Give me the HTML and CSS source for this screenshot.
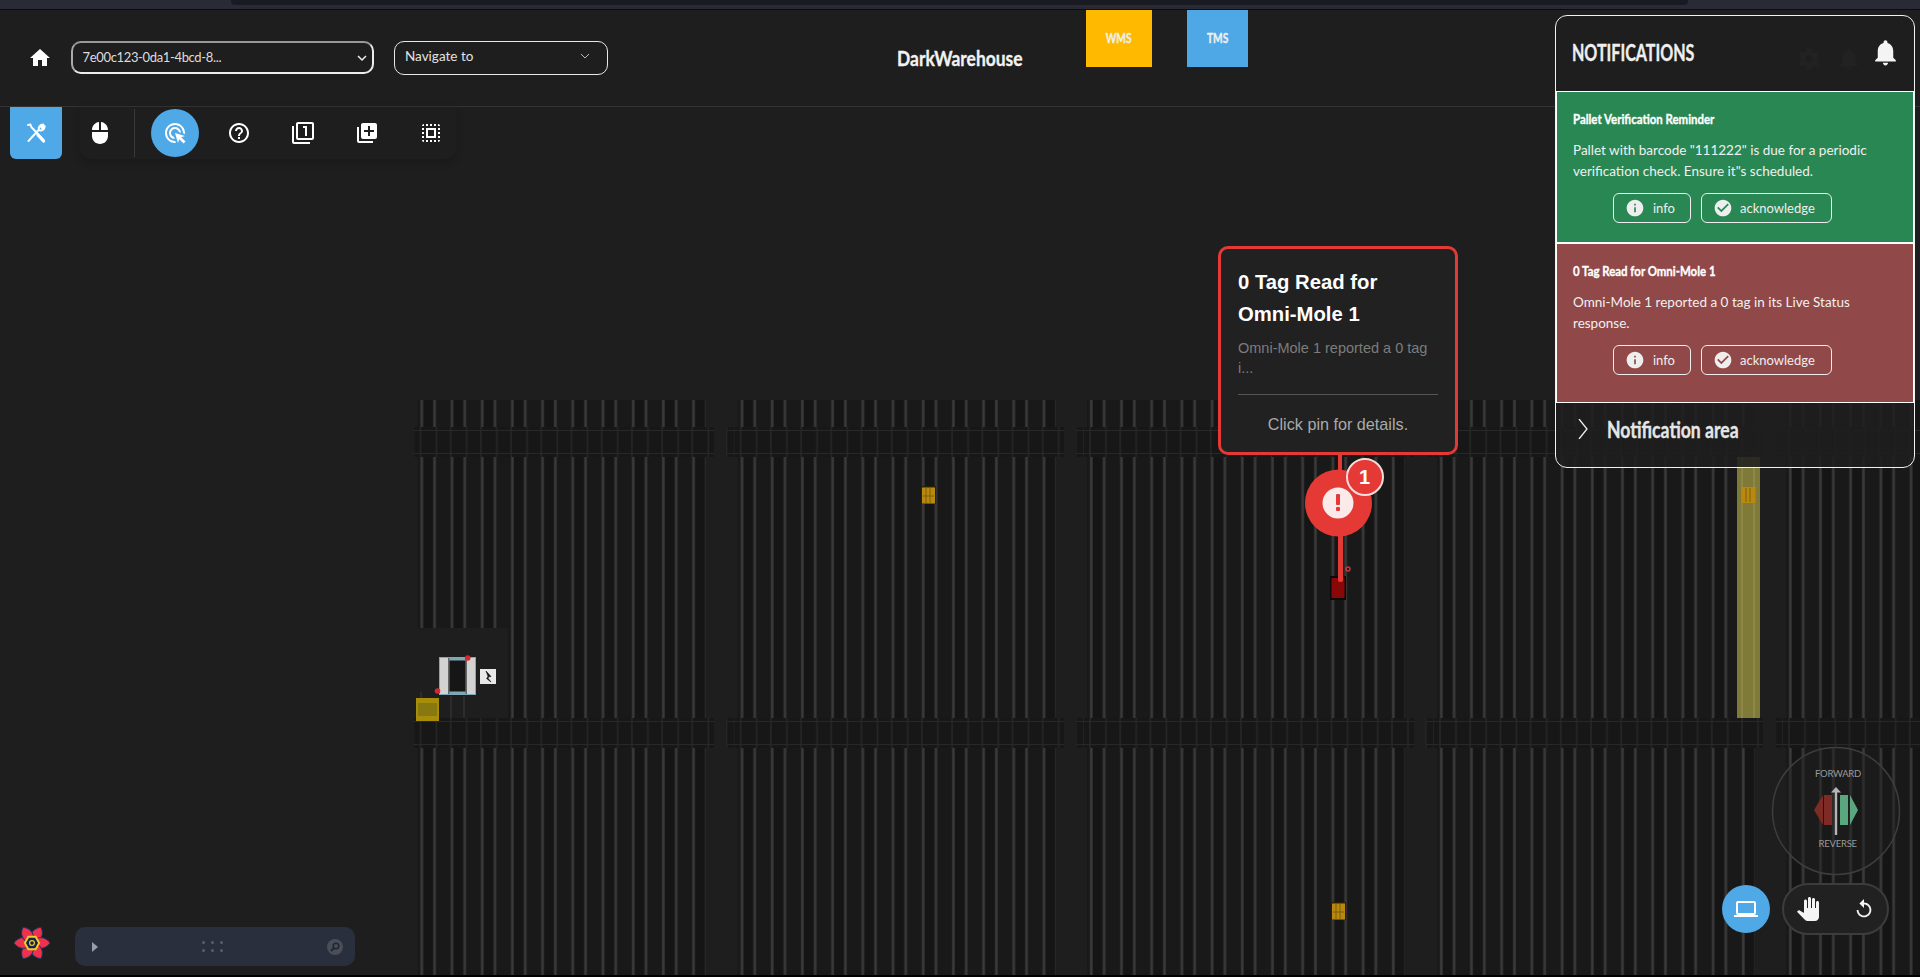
FILE: index.html
```html
<!DOCTYPE html>
<html lang="en">
<head>
<meta charset="utf-8">
<title>DarkWarehouse</title>
<link rel="stylesheet" href="styles.css">
</head>
<body>
<svg class="map" width="1920" height="977" viewBox="0 0 1920 977">
  <defs>
    <pattern id="lanes" patternUnits="userSpaceOnUse" width="30.2" height="8">
      <rect width="30.2" height="8" fill="#191919"/>
      <rect x="0" width="15" height="8" fill="#151515"/>
      <rect x="-.5" width="3.400" height="8" fill="#222"/>
      <rect x="29.700" width=".5" height="8" fill="#222"/>
      <rect x="12.300" width="3.400" height="8" fill="#222"/>
      <rect x=".2" width="2.200" height="8" fill="#3a3a3a"/>
      <rect x="13" width="2.200" height="8" fill="#3a3a3a"/>
    </pattern>
    <pattern id="bandlanes" patternUnits="userSpaceOnUse" width="30.2" height="30">
      <rect width="30.2" height="30" fill="#171717"/>
      <rect x="-.8" width="1.600" height="30" fill="#262626"/>
      <rect x="15.200" width="1.600" height="30" fill="#262626"/>
      <rect x="29.400" width=".8" height="30" fill="#262626"/>
    </pattern>
    <g id="hband">
      <rect x="-7" y="0" width="1" height="30" fill="#222"/>
      <rect x="-14" y="3" width="400" height="1" fill="#282828"/>
      <rect x="-14" y="26" width="400" height="1" fill="#282828"/>
    </g>
    <clipPath id="c1"><rect x="413" y="400" width="301" height="575"/></clipPath>
    <clipPath id="c2"><rect x="726" y="400" width="338" height="575"/></clipPath>
    <clipPath id="c3"><rect x="1076" y="400" width="338" height="575"/></clipPath>
    <clipPath id="c4"><rect x="1425" y="400" width="338" height="575"/></clipPath>
    <clipPath id="c5"><rect x="1776" y="400" width="144" height="575"/></clipPath>
    <path id="petal" d="M0 0C-8-5-7-14 0-19C7-14 8-5 0 0Z"/>
  </defs>

  <g clip-path="url(#c1)"><g transform="translate(420.5 0)">
    <rect x="-3" y="400" width="288" height="27" fill="url(#lanes)"/>
    <rect x="-3" y="457" width="288" height="261" fill="url(#lanes)"/>
    <rect x="-3" y="748" width="288" height="227" fill="url(#lanes)"/>
    <rect x="-8" y="427" width="302" height="30" fill="url(#bandlanes)"/>
    <rect x="-8" y="718" width="302" height="30" fill="url(#bandlanes)"/>
    <use href="#hband" y="427"/><use href="#hband" y="718"/>
  </g></g>
  <g clip-path="url(#c2)"><g transform="translate(740.7 0)">
    <rect x="-3" y="400" width="318" height="27" fill="url(#lanes)"/>
    <rect x="-3" y="457" width="318" height="261" fill="url(#lanes)"/>
    <rect x="-3" y="748" width="318" height="227" fill="url(#lanes)"/>
    <rect x="-15" y="427" width="340" height="30" fill="url(#bandlanes)"/>
    <rect x="-15" y="718" width="340" height="30" fill="url(#bandlanes)"/>
    <use href="#hband" y="427"/><use href="#hband" y="718"/>
  </g></g>
  <g clip-path="url(#c3)"><g transform="translate(1090 0)">
    <rect x="-3" y="400" width="318" height="27" fill="url(#lanes)"/>
    <rect x="-3" y="457" width="318" height="261" fill="url(#lanes)"/>
    <rect x="-3" y="748" width="318" height="227" fill="url(#lanes)"/>
    <rect x="-15" y="427" width="340" height="30" fill="url(#bandlanes)"/>
    <rect x="-15" y="718" width="340" height="30" fill="url(#bandlanes)"/>
    <use href="#hband" y="427"/><use href="#hband" y="718"/>
  </g></g>
  <g clip-path="url(#c4)"><g transform="translate(1440 0)">
    <rect x="-3" y="400" width="318" height="27" fill="url(#lanes)"/>
    <rect x="-3" y="457" width="318" height="261" fill="url(#lanes)"/>
    <rect x="-3" y="748" width="318" height="227" fill="url(#lanes)"/>
    <rect x="-15" y="427" width="340" height="30" fill="url(#bandlanes)"/>
    <rect x="-15" y="718" width="340" height="30" fill="url(#bandlanes)"/>
    <use href="#hband" y="427"/><use href="#hband" y="718"/>
  </g></g>
  <g clip-path="url(#c5)"><g transform="translate(1789 0)">
    <rect x="-3" y="400" width="140" height="27" fill="url(#lanes)"/>
    <rect x="-3" y="457" width="140" height="261" fill="url(#lanes)"/>
    <rect x="-3" y="748" width="140" height="227" fill="url(#lanes)"/>
    <rect x="-13" y="427" width="150" height="30" fill="url(#bandlanes)"/>
    <rect x="-13" y="718" width="150" height="30" fill="url(#bandlanes)"/>
    <use href="#hband" y="427"/><use href="#hband" y="718"/>
  </g></g>

  <rect x="414" y="628" width="94" height="90" fill="#1e1e1e"/>
  <rect x="420" y="692" width="2" height="6" fill="#2c2c2c"/>
  <rect x="450" y="696" width="2" height="22" fill="#2c2c2c"/>
  <rect x="463" y="696" width="2" height="22" fill="#2c2c2c"/>

  <rect x="439" y="657" width="37" height="38" fill="#7ea9b5"/>
  <rect x="440" y="658" width="8" height="36" fill="#d2d2d2"/>
  <rect x="467" y="658" width="8" height="36" fill="#d2d2d2"/>
  <rect x="448" y="658" width="1.500" height="36" fill="#666"/>
  <rect x="465.500" y="658" width="1.500" height="36" fill="#666"/>
  <rect x="449.500" y="660.500" width="16" height="31" fill="#161616"/>
  <circle cx="467.7" cy="658" r="2.800" fill="#d8262c"/>
  <circle cx="437.500" cy="691" r="2.800" fill="#d8262c"/>
  <rect x="480" y="669" width="16" height="15" fill="#e8e8e8"/>
  <path d="M486 671L491 676.500L487 677L491 682L486.500 678.500L488.500 677.500Z" fill="#111" stroke="#111" stroke-width=".6"/>
  <rect x="416" y="698" width="23" height="23" fill="#a68e0c"/>
  <rect x="418" y="703" width="19" height="13" fill="#87790f"/>

  <rect x="921" y="486" width="15" height="18" fill="#2a2108"/>
  <rect x="922" y="487.500" width="13" height="16" fill="#b8890e"/>
  <path d="M926 488V503M930 488V503M923 496H934" stroke="#7e5f0a" stroke-width="1"/>
  <rect x="1331" y="902" width="15" height="18" fill="#2a2108"/>
  <rect x="1332" y="903.500" width="13" height="16" fill="#b8890e"/>
  <path d="M1336 904V919M1340 904V919M1333 912H1344" stroke="#7e5f0a" stroke-width="1"/>

  <rect x="1737" y="457" width="23" height="261" fill="#7f7a38"/>
  <rect x="1741" y="457" width="2" height="261" fill="#8d8849"/>
  <rect x="1753" y="457" width="2" height="261" fill="#8d8849"/>
  <rect x="1741.500" y="487" width="14" height="16" fill="#b8890e"/>
  <path d="M1746 488V502M1750 488V502" stroke="#7e5f0a" stroke-width="1"/>

  <rect x="1330" y="576" width="16" height="24" fill="#0a0a0a"/>
  <rect x="1331.500" y="578" width="13" height="20" fill="#8a0707"/>
  <rect x="1338" y="455" width="4" height="16" fill="#e53935"/>
  <rect x="1338" y="530" width="5" height="52" rx="2" fill="#e53935"/>
  <circle cx="1348" cy="569" r="2" fill="none" stroke="#c7373a" stroke-width="1.500"/>
  <circle cx="1338.500" cy="503" r="33.500" fill="#e53935"/>
  <circle cx="1338" cy="503" r="15.500" fill="#fbeaea"/>
  <rect x="1336" y="494" width="4" height="11" rx="1" fill="#e53935"/>
  <rect x="1336" y="507" width="4" height="4" rx="1" fill="#e53935"/>
  <circle cx="1365" cy="477" r="18" fill="#e53935" stroke="#f6dcdc" stroke-width="2"/>
  <text class="badge" x="1364.500" y="484">1</text>
</svg>

<div class="chrome"><div class="chrome-tab"></div></div>

<header class="topbar">
  <svg class="ic-home" viewBox="0 0 24 24"><path d="M10 20v-6h4v6h5v-8h3L12 3 2 12h3v8z"/></svg>
  <div class="select-id"><span>7e00c123-0da1-4bcd-8...</span>
    <svg class="chev" viewBox="0 0 12 8"><path d="M2 2l4 4 4-4"/></svg></div>
  <div class="select-nav"><span>Navigate to</span>
    <svg class="chev-thin" viewBox="0 0 12 8"><path d="M2 2l4 4 4-4"/></svg></div>
  <div class="brand"><span class="narrow">DarkWarehouse</span></div>
  <div class="tile tile-wms"><span class="narrow-c">WMS</span></div>
  <div class="tile tile-tms"><span class="narrow-c">TMS</span></div>
  <div class="status-icons">
    <svg class="ghost" viewBox="0 0 24 24"><path d="M19.14 12.94c.04-.3.06-.61.06-.94 0-.32-.02-.64-.07-.94l2.03-1.58c.18-.14.23-.41.12-.61l-1.92-3.32c-.12-.22-.37-.29-.59-.22l-2.39.96c-.5-.38-1.03-.7-1.62-.94l-.36-2.54c-.04-.24-.24-.41-.48-.41h-3.84c-.24 0-.43.17-.47.41l-.36 2.54c-.59.24-1.13.57-1.62.94l-2.39-.96c-.22-.08-.47 0-.59.22L2.74 8.87c-.12.21-.08.47.12.61l2.03 1.58c-.05.3-.09.63-.09.94s.02.64.07.94l-2.03 1.58c-.18.14-.23.41-.12.61l1.92 3.32c.12.22.37.29.59.22l2.39-.96c.5.38 1.03.7 1.62.94l.36 2.54c.05.24.24.41.48.41h3.84c.24 0 .44-.17.47-.41l.36-2.54c.59-.24 1.13-.56 1.62-.94l2.39.96c.22.08.47 0 .59-.22l1.92-3.32c.12-.22.07-.47-.12-.61l-2.01-1.58zM12 15.6c-1.98 0-3.6-1.62-3.6-3.6s1.62-3.6 3.6-3.6 3.6 1.62 3.6 3.6-1.62 3.6-3.6 3.6z"/></svg>
    <svg class="ghost" viewBox="0 0 24 24"><path d="M12 22c1.1 0 2-.9 2-2h-4c0 1.1.89 2 2 2zm6-6v-5c0-3.07-1.64-5.64-4.5-6.32V4c0-.83-.67-1.5-1.5-1.5s-1.5.67-1.500 1.500v.68C7.630 5.360 6 7.920 6 11v5l-2 2v1h16v-1l-2-2z"/></svg>
  </div>
</header>

<nav class="toolrow">
  <div class="tool-main">
    <svg viewBox="0 0 24 24"><path class="tm-thin" d="M4 4l2.500-.5 .8 2.500 12.700 13.500"/><path class="tm-thick" d="M14 14l5.500 6"/><path class="tm-thin" d="M4.500 20l10.500-11.500c-.8-2.500 1-5 4.300-5L17 6l1 1.200 2.700-2.200c.3 3-2 5-5 4.300"/></svg>
  </div>
  <div class="tools">
    <svg class="t-ic t-mouse" viewBox="0 0 24 24"><path d="M13 1.070V9h7c0-4.080-3.050-7.440-7-7.930zM4 15c0 4.420 3.580 8 8 8s8-3.580 8-8v-4H4v4zm7-13.930C7.050 1.560 4 4.920 4 9h7V1.070z"/></svg>
    <span class="t-sep"></span>
    <span class="t-active"><svg viewBox="0 0 24 24"><path d="M11.710 17.990C8.530 17.840 6 15.220 6 12c0-3.310 2.690-6 6-6 3.220 0 5.840 2.530 5.990 5.710l-2.100-.63C15.480 9.310 13.890 8 12 8c-2.210 0-4 1.790-4 4 0 1.890 1.310 3.480 3.080 3.890l.63 2.100zM22 12c0 .3-.01.6-.04.9l-1.970-.59c.01-.1.01-.21.01-.31 0-4.420-3.580-8-8-8s-8 3.580-8 8 3.580 8 8 8c.1 0 .21 0 .31-.01l.59 1.970c-.3.03-.6.04-.9.04-5.520 0-10-4.480-10-10S6.480 2 12 2s10 4.480 10 10zm-3.770 4.260L22 15l-10-3 3 10 1.260-3.770 4.270 4.270 1.980-1.980-4.280-4.260z"/></svg></span>
    <svg class="t-ic t-help" viewBox="0 0 24 24"><path d="M11 18h2v-2h-2v2zm1-16C6.480 2 2 6.480 2 12s4.480 10 10 10 10-4.480 10-10S17.520 2 12 2zm0 18c-4.410 0-8-3.590-8-8s3.590-8 8-8 8 3.590 8 8-3.590 8-8 8zm0-14c-2.210 0-4 1.790-4 4h2c0-1.100.9-2 2-2s2 .9 2 2c0 2-3 1.750-3 5h2c0-2.250 3-2.500 3-5 0-2.210-1.790-4-4-4z"/></svg>
    <svg class="t-ic" viewBox="0 0 24 24"><path d="M3 5H1v16c0 1.100.9 2 2 2h16v-2H3V5zm11 10h2V5h-4v2h2v8zm7-14H7c-1.100 0-2 .9-2 2v14c0 1.100.9 2 2 2h14c1.100 0 2-.9 2-2V3c0-1.100-.9-2-2-2zm0 16H7V3h14v14z"/></svg>
    <svg class="t-ic" viewBox="0 0 24 24"><path d="M4 6H2v14c0 1.100.9 2 2 2h14v-2H4V6zm16-4H8c-1.100 0-2 .9-2 2v12c0 1.100.9 2 2 2h12c1.100 0 2-.9 2-2V4c0-1.100-.9-2-2-2zm-1 9h-4v4h-2v-4H9V9h4V5h2v4h4v2z"/></svg>
    <svg class="t-ic" viewBox="0 0 24 24"><path d="M3 5h2V3c-1.100 0-2 .9-2 2zm0 8h2v-2H3v2zm4 8h2v-2H7v2zM3 9h2V7H3v2zm10-6h-2v2h2V3zm6 0v2h2c0-1.100-.9-2-2-2zM5 21v-2H3c0 1.100.9 2 2 2zm-2-4h2v-2H3v2zM9 3H7v2h2V3zm2 18h2v-2h-2v2zm8-8h2v-2h-2v2zm0 8c1.100 0 2-.9 2-2h-2v2zm0-12h2V7h-2v2zm0 8h2v-2h-2v2zm-4 4h2v-2h-2v2zm0-16h2V3h-2v2zM7 17h10V7H7v10zm2-8h6v6H9V9z"/></svg>
  </div>
</nav>

<aside class="tooltip">
  <h3 class="tip-title">0 Tag Read for Omni-Mole 1</h3>
  <p class="tip-text">Omni-Mole 1 reported a 0 tag i...</p>
  <p class="tip-foot">Click pin for details.</p>
</aside>

<aside class="panel">
  <div class="panel-head">
    <h2><span class="narrow">NOTIFICATIONS</span></h2>
    <svg viewBox="0 0 24 24"><path d="M12 22c1.100 0 2-.9 2-2h-4c0 1.100.89 2 2 2zm6-6v-5c0-3.070-1.640-5.640-4.500-6.320V4c0-.83-.67-1.500-1.500-1.500s-1.500.67-1.500 1.500v.68C7.630 5.360 6 7.920 6 11v5l-2 2v1h16v-1l-2-2z"/></svg>
  </div>
  <section class="card card-green">
    <h4><span class="narrow">Pallet Verification Reminder</span></h4>
    <p>Pallet with barcode "111222" is due for a periodic verification check. Ensure it"s scheduled.</p>
    <div class="actions">
      <button class="btn btn-info"><svg viewBox="0 0 24 24"><path d="M12 2C6.480 2 2 6.480 2 12s4.480 10 10 10 10-4.480 10-10S17.520 2 12 2zm1 15h-2v-6h2v6zm0-8h-2V7h2v2z"/></svg>info</button>
      <button class="btn btn-ack"><svg viewBox="0 0 24 24"><path d="M12 2C6.480 2 2 6.480 2 12s4.480 10 10 10 10-4.480 10-10S17.520 2 12 2zm-2 15l-5-5 1.410-1.410L10 14.170l7.590-7.590L19 8l-9 9z"/></svg>acknowledge</button>
    </div>
  </section>
  <section class="card card-red">
    <h4><span class="narrow">0 Tag Read for Omni-Mole 1</span></h4>
    <p>Omni-Mole 1 reported a 0 tag in its Live Status response.</p>
    <div class="actions">
      <button class="btn btn-info"><svg viewBox="0 0 24 24"><path d="M12 2C6.480 2 2 6.480 2 12s4.480 10 10 10 10-4.480 10-10S17.520 2 12 2zm1 15h-2v-6h2v6zm0-8h-2V7h2v2z"/></svg>info</button>
      <button class="btn btn-ack"><svg viewBox="0 0 24 24"><path d="M12 2C6.480 2 2 6.480 2 12s4.480 10 10 10 10-4.480 10-10S17.520 2 12 2zm-2 15l-5-5 1.410-1.410L10 14.170l7.590-7.590L19 8l-9 9z"/></svg>acknowledge</button>
    </div>
  </section>
  <div class="panel-foot">
    <svg viewBox="0 0 12 20"><path d="M2 0l8 10-8 10"/></svg>
    <span class="narrow">Notification area</span>
  </div>
</aside>

<svg class="dial" width="130" height="130" viewBox="0 0 130 130">
  <circle cx="65" cy="65" r="63.500" fill="rgba(30,30,30,.45)" stroke="#3d3d3d" stroke-width="1.500"/>
  <text class="dial-text" x="67" y="30.500">FORWARD</text>
  <text class="dial-text" x="66.700" y="100.500">REVERSE</text>
  <path d="M43 64l9-15v30z" fill="#7d2b24"/>
  <rect x="53" y="49" width="8" height="30" fill="#7d2b24"/>
  <rect x="69" y="49" width="8" height="30" fill="#5aa67e"/>
  <path d="M87 64l-8-15v30z" fill="#5aa67e"/>
  <rect x="63.800" y="45" width="2.400" height="44" fill="#b5b5b5"/>
  <path d="M60 46.500l5-5.500 5 5.500z" fill="#b5b5b5"/>
</svg>

<div class="dock">
  <span class="dock-laptop"><svg viewBox="0 0 24 24"><path d="M20 18c1.100 0 1.990-.9 1.990-2L22 6c0-1.100-.9-2-2-2H4c-1.100 0-2 .9-2 2v10c0 1.100.9 2 2 2H0v2h24v-2h-4zM4 6h16v10H4V6z"/></svg></span>
  <div class="dock-pill">
    <svg class="hand" viewBox="0 0 24 24"><path d="M23 5.500V20c0 2.200-1.800 4-4 4h-7.300c-1.080 0-2.100-.43-2.850-1.190L1 14.830s1.260-1.230 1.300-1.250c.22-.19.49-.29.79-.29.22 0 .42.06.6.16.04.01 4.310 2.460 4.310 2.460V4c0-.83.67-1.500 1.500-1.500S11 3.170 11 4v7h1V1.500c0-.83.67-1.500 1.500-1.500S15 .67 15 1.500V11h1V2.500c0-.83.67-1.500 1.500-1.500s1.500.67 1.500 1.500V11h1V5.500c0-.83.67-1.500 1.500-1.500s1.500.67 1.500 1.500z"/></svg>
    <svg class="undo" viewBox="0 0 24 24"><path d="M12 5V1L7 6l5 5V7c3.310 0 6 2.690 6 6s-2.690 6-6 6-6-2.690-6-6H4c0 4.420 3.580 8 8 8s8-3.580 8-8-3.580-8-8-8z"/></svg>
  </div>
</div>

<div class="devbar">
  <svg class="logo" viewBox="-22 -22 44 44">
    <g class="petals">
      <use href="#petal" transform="rotate(30)"/><use href="#petal" transform="rotate(90)"/><use href="#petal" transform="rotate(150)"/>
      <use href="#petal" transform="rotate(210)"/><use href="#petal" transform="rotate(270)"/><use href="#petal" transform="rotate(330)"/>
    </g>
    <path class="hex" d="M-7.500 0L-3.800-6.500H3.800L7.500 0L3.800 6.500H-3.800Z"/>
    <circle class="hub" r="2.500"/>
  </svg>
  <div class="devpanel">
    <span class="dev-play"></span>
    <span class="dev-dots"><i></i><i></i><i></i><i></i><i></i><i></i></span>
    <svg class="dev-search" viewBox="0 0 16 16"><circle cx="8" cy="8" r="8" fill="#4a4e59"/><circle cx="9" cy="7" r="2.800" fill="none" stroke="#23262f" stroke-width="1.600"/><path d="M7 9l-3 3" stroke="#23262f" stroke-width="2"/></svg>
  </div>
</div>
</body>
</html>
```
FILE: styles.css
```css
* { box-sizing: border-box; }
html, body { margin: 0; padding: 0; }
body {
  position: relative;
  width: 1920px;
  height: 977px;
  overflow: hidden;
  background: linear-gradient(#1e1e1e 975px, #000 975px);
  font-family: Lato, "Open Sans", sans-serif;
  color: #fff;
}
svg { display: block; flex: none; }
.map { position: absolute; left: 0; top: 0; }
.badge { font: 700 20px "Liberation Sans", sans-serif; fill: #fff; text-anchor: middle; }

/* Condensed bold headings: no condensed family is installed, so Lato is narrowed. */
.narrow, .narrow-c {
  display: inline-block;
  font-weight: 700;
  white-space: nowrap;
  -webkit-text-stroke: .35px currentColor;
}
.narrow { transform-origin: left center; }
.narrow-c { transform: scaleX(.78); }

.chrome {
  position: relative;
  height: 10px;
  background: #2a2936;
  border-bottom: 1px solid #0c0c0e;
}
.chrome-tab {
  position: absolute;
  left: 231px;
  top: 0;
  width: 1457px;
  height: 5px;
  background: #1a1a22;
  border-radius: 0 0 4px 4px;
}

.topbar {
  position: relative;
  display: flex;
  align-items: center;
  height: 97px;
  padding-left: 28px;
  border-bottom: 1px solid #333;
}
.ic-home { width: 24px; height: 24px; fill: #fff; margin-top: -1px; }
.select-id, .select-nav {
  display: flex;
  flex: none;
  align-items: center;
  justify-content: space-between;
  color: #e2e2e2;
  font-size: 13px;
}
.select-id {
  width: 303px;
  height: 33px;
  margin-left: 18.600px;
  margin-top: -2px;
  padding: 0 4px 0 10px;
  border: 2px solid #ededed;
  border-left-color: #aaa;
  border-top-color: #999;
  border-radius: 10px;
  letter-spacing: -.35px;
  color: #ddd;
}
.chev { width: 12px; height: 8px; fill: none; stroke: #eee; stroke-width: 1.500; margin-top: 2px; }
.select-nav {
  width: 214px;
  height: 34px;
  margin-left: 20.400px;
  margin-top: -1px;
  padding: 0 16px 3px 10px;
  border: 1px solid #e8e8e8;
  border-radius: 10px;
  font-size: 13.500px;
}
.chev-thin { width: 12px; height: 8px; fill: none; stroke: #bbb; stroke-width: 1; }
.brand {
  flex: none;
  width: 126px;
  margin-left: 289px;
  margin-top: -2px;
  font-size: 21px;
  color: #f2f2f2;
}
.brand .narrow { transform: scaleX(.83); }
.tile {
  flex: none;
  align-self: flex-start;
  display: flex;
  align-items: center;
  justify-content: center;
  height: 57px;
  padding-bottom: 1px;
  font-size: 13px;
  color: #efefef;
}
.tile-wms { width: 66px; margin-left: 63px; background: #ffba00; }
.tile-tms { width: 61px; margin-left: 35px; background: #4fa8e6; }
.status-icons { display: flex; flex: none; gap: 14px; margin-left: 548px; margin-top: 1px; }
.ghost { width: 26px; height: 26px; fill: #3a3a3a; }

.toolrow {
  position: relative;
  display: flex;
  align-items: flex-start;
  padding-left: 10px;
  gap: 18px;
}
.tool-main {
  display: flex;
  align-items: center;
  justify-content: center;
  width: 52px;
  height: 52px;
  background: #4fa9e6;
  border-radius: 0 0 6px 6px;
}
.tool-main svg { width: 24px; height: 24px; fill: none; stroke: #fff; stroke-linecap: round; stroke-linejoin: round; }
.tm-thin { stroke-width: 1.900; }
.tm-thick { stroke-width: 3.200; }
.tools {
  display: flex;
  align-items: center;
  width: 376px;
  height: 52px;
  padding-left: 8px;
  background: #1e1e1e;
  border-radius: 0 0 10px 10px;
  box-shadow: 0 3px 8px rgba(0,0,0,.18);
}
.tools svg { fill: #fff; }
.t-ic { width: 24px; height: 24px; margin-left: 40px; }
.t-mouse { margin-left: 0; }
.t-sep { width: 1px; height: 48px; margin-left: 22px; background: #3a3a3a; }
.t-active {
  display: flex;
  align-items: center;
  justify-content: center;
  width: 48px;
  height: 48px;
  margin-left: 16px;
  border-radius: 50%;
  background: #4fa9e6;
}
.t-active svg { width: 24px; height: 24px; }
.t-help { margin-left: 28px; }

.tooltip {
  position: absolute;
  left: 1218px;
  top: 246px;
  width: 240px;
  height: 209px;
  padding: 16.700px 17px 0;
  background: #212121;
  border: 3px solid #e53935;
  border-radius: 10px;
  font-family: "Liberation Sans", Arial, sans-serif;
}
.tip-title { margin: 0; font-size: 20.300px; line-height: 32px; font-weight: 700; color: #fff; }
.tip-text { margin: 8.500px 0 0; padding-bottom: 16px; font-size: 14.500px; line-height: 20px; color: #7c7c7c; border-bottom: 1px solid #555; }
.tip-foot { margin: 19px 0 0; text-align: center; font-size: 16.200px; line-height: 20px; color: #aaa; }

.panel {
  position: absolute;
  left: 1555px;
  top: 15px;
  display: flex;
  flex-direction: column;
  width: 360px;
  height: 453px;
  background: rgba(30,30,30,.86);
  border: 1px solid #f2f2f2;
  border-radius: 12px;
}
.panel-head {
  display: flex;
  align-items: center;
  justify-content: space-between;
  height: 75px;
  padding: 0 13px 2px 16px;
}
.panel-head h2 { margin: 0; font-size: 22px; color: #efefef; font-weight: 700; }
.panel-head .narrow { transform: scaleX(.73); }
.panel-head svg { width: 31px; height: 31px; fill: #f4f4f4; }
.card {
  padding: 19px 16px 0;
  border: 1px solid #fff;
  color: #f0f0f0;
}
.card-green { height: 152px; background: #298753; }
.card-red { height: 160px; background: #914848; }
.card h4 { margin: 0; font-size: 14px; line-height: 16px; color: #fff; }
.card h4 .narrow { transform: scaleX(.816); }
.card p { margin: 13px 0 0; font-size: 13.500px; line-height: 21px; }
.actions { display: flex; gap: 10px; margin: 11px 0 0 40px; }
.btn {
  display: flex;
  align-items: center;
  height: 30px;
  padding: 0;
  background: transparent;
  border: 1px solid #eee;
  border-radius: 6px;
  color: #eee;
  font-family: Lato, sans-serif;
  font-size: 13px;
}
.btn svg { width: 20px; height: 20px; fill: #eee; }
.btn-info { width: 78px; padding-left: 11px; gap: 8px; }
.btn-ack { width: 131px; padding-left: 11px; gap: 7px; }
.panel-foot {
  display: flex;
  align-items: center;
  flex: 1;
  padding: 0 0 12px 21px;
  gap: 17.700px;
}
.panel-foot svg { width: 12px; height: 20px; fill: none; stroke: #eee; stroke-width: 1.300; }
.panel-foot span { font-size: 22px; color: #e6e6e6; transform: scaleX(.8); }

.dial { position: absolute; left: 1771px; top: 746px; }
.dial-text { font: 9.500px Lato, sans-serif; letter-spacing: -.25px; fill: #9a9a9a; text-anchor: middle; }

.dock {
  position: absolute;
  left: 1722px;
  top: 883px;
  display: flex;
  align-items: center;
  gap: 12px;
}
.dock-laptop {
  display: flex;
  align-items: center;
  justify-content: center;
  width: 48px;
  height: 48px;
  border-radius: 50%;
  background: #4fa9e6;
}
.dock-laptop svg { width: 24px; height: 24px; fill: #fff; }
.dock-pill {
  display: flex;
  align-items: center;
  width: 107px;
  height: 52px;
  padding-left: 12px;
  background: #212121;
  border: 2px solid #3c3c3c;
  border-radius: 26px;
}
.hand { width: 24px; height: 24px; fill: #f4f4f4; }
.undo { width: 22px; height: 22px; margin-left: 33px; fill: #f4f4f4; }

.devbar {
  position: absolute;
  left: 11px;
  top: 922px;
  display: flex;
  align-items: center;
  gap: 22px;
  height: 44px;
}
.logo { width: 42px; height: 42px; margin-top: -2px; }
.petals { fill: #f0304f; stroke: #123a5c; stroke-width: 1; }
.hex { fill: #18264a; stroke: #f0cf2c; stroke-width: 2; }
.hub { fill: none; stroke: #f0cf2c; stroke-width: 1.300; }
.devpanel {
  position: relative;
  display: flex;
  align-items: center;
  justify-content: space-between;
  width: 280px;
  height: 39px;
  margin-top: 5px;
  padding: 0 12px 0 17px;
  background: #2a2f3d;
  border-radius: 10px;
}
.dev-play {
  width: 0;
  height: 0;
  border-left: 6px solid #9a9cab;
  border-top: 5.500px solid transparent;
  border-bottom: 5.500px solid transparent;
}
.dev-dots {
  display: grid;
  grid-template-columns: repeat(3, 3px);
  gap: 5px 6px;
}
.dev-dots i { width: 3px; height: 3px; border-radius: 50%; background: #5a5e6c; }
.dev-search { width: 16px; height: 16px; }
```
